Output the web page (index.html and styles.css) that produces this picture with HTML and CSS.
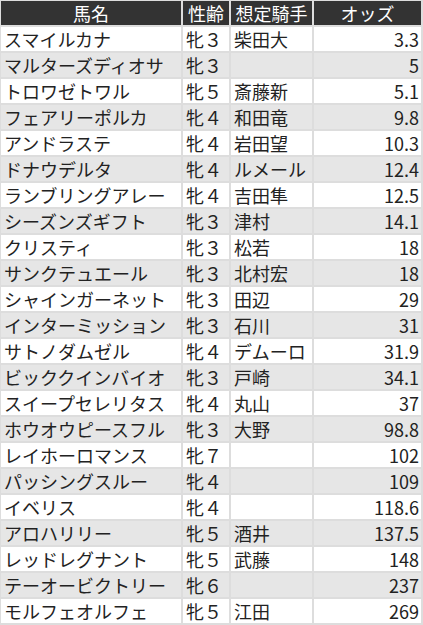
FILE: index.html
```html
<!DOCTYPE html>
<html lang="ja">
<head>
<meta charset="utf-8">
<title>オッズ表</title>
<link rel="stylesheet" href="styles.css">
</head>
<body>
<div class="table">
  <div class="row head"><div class="c">馬名</div><div class="c">性齢</div><div class="c">想定騎手</div><div class="c">オッズ</div></div>
  <div class="row"><div class="c">スマイルカナ</div><div class="c">牝３</div><div class="c">柴田大</div><div class="c num">3.3</div></div>
  <div class="row"><div class="c">マルターズディオサ</div><div class="c">牝３</div><div class="c"></div><div class="c num">5</div></div>
  <div class="row"><div class="c">トロワゼトワル</div><div class="c">牝５</div><div class="c">斎藤新</div><div class="c num">5.1</div></div>
  <div class="row"><div class="c">フェアリーポルカ</div><div class="c">牝４</div><div class="c">和田竜</div><div class="c num">9.8</div></div>
  <div class="row"><div class="c">アンドラステ</div><div class="c">牝４</div><div class="c">岩田望</div><div class="c num">10.3</div></div>
  <div class="row"><div class="c">ドナウデルタ</div><div class="c">牝４</div><div class="c">ルメール</div><div class="c num">12.4</div></div>
  <div class="row"><div class="c">ランブリングアレー</div><div class="c">牝４</div><div class="c">吉田隼</div><div class="c num">12.5</div></div>
  <div class="row"><div class="c">シーズンズギフト</div><div class="c">牝３</div><div class="c">津村</div><div class="c num">14.1</div></div>
  <div class="row"><div class="c">クリスティ</div><div class="c">牝３</div><div class="c">松若</div><div class="c num">18</div></div>
  <div class="row"><div class="c">サンクテュエール</div><div class="c">牝３</div><div class="c">北村宏</div><div class="c num">18</div></div>
  <div class="row"><div class="c">シャインガーネット</div><div class="c">牝３</div><div class="c">田辺</div><div class="c num">29</div></div>
  <div class="row"><div class="c">インターミッション</div><div class="c">牝３</div><div class="c">石川</div><div class="c num">31</div></div>
  <div class="row"><div class="c">サトノダムゼル</div><div class="c">牝４</div><div class="c">デムーロ</div><div class="c num">31.9</div></div>
  <div class="row"><div class="c">ビッククインバイオ</div><div class="c">牝３</div><div class="c">戸崎</div><div class="c num">34.1</div></div>
  <div class="row"><div class="c">スイープセレリタス</div><div class="c">牝４</div><div class="c">丸山</div><div class="c num">37</div></div>
  <div class="row"><div class="c">ホウオウピースフル</div><div class="c">牝３</div><div class="c">大野</div><div class="c num">98.8</div></div>
  <div class="row"><div class="c">レイホーロマンス</div><div class="c">牝７</div><div class="c"></div><div class="c num">102</div></div>
  <div class="row"><div class="c">パッシングスルー</div><div class="c">牝４</div><div class="c"></div><div class="c num">109</div></div>
  <div class="row"><div class="c">イベリス</div><div class="c">牝４</div><div class="c"></div><div class="c num">118.6</div></div>
  <div class="row"><div class="c">アロハリリー</div><div class="c">牝５</div><div class="c">酒井</div><div class="c num">137.5</div></div>
  <div class="row"><div class="c">レッドレグナント</div><div class="c">牝５</div><div class="c">武藤</div><div class="c num">148</div></div>
  <div class="row"><div class="c">テーオービクトリー</div><div class="c">牝６</div><div class="c"></div><div class="c num">237</div></div>
  <div class="row"><div class="c">モルフェオルフェ</div><div class="c">牝５</div><div class="c">江田</div><div class="c num">269</div></div>
</div>
</body>
</html>
```
FILE: styles.css
```css
html, body {
  margin: 0;
  padding: 0;
  background: #dddddd;
}
.table {
  display: grid;
  grid-template-columns: 180px 46px 81px 107px;
  grid-auto-rows: 24px;
  gap: 2px;
  padding: 1px 2px 2px 1px;
  background: #dddddd;
  font-family: "Noto Sans CJK JP", "Noto Sans", sans-serif;
  font-size: 18px;
  color: #222222;
}
.row {
  display: contents;
}
.c {
  background: #ffffff;
  line-height: 24px;
  padding: 0 3px;
  white-space: nowrap;
  overflow: hidden;
}
.row:nth-child(odd) .c {
  background: #e6e6e6;
}
.row.head .c {
  background: #333333;
  color: #ffffff;
  text-align: center;
}
.c.num {
  text-align: right;
  padding-right: 2px;
}
```
